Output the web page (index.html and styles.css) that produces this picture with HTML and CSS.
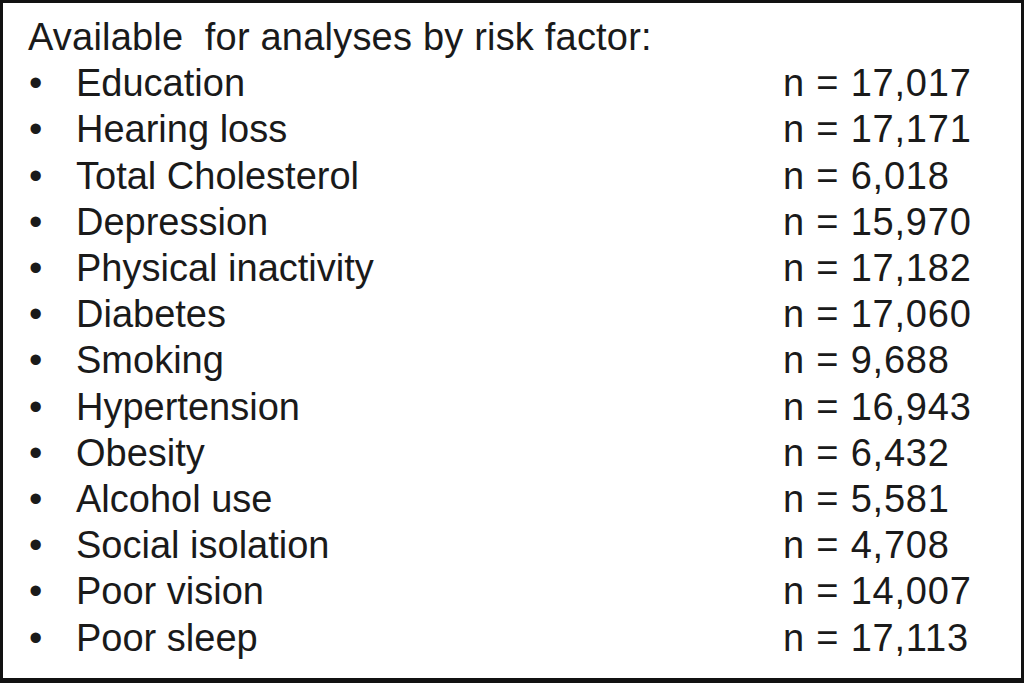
FILE: index.html
```html
<!DOCTYPE html>
<html>
<head>
<meta charset="utf-8">
<link rel="stylesheet" href="styles.css">
</head>
<body>
<div class="box">
  <div class="title">Available&nbsp; for analyses by risk factor:</div>
  <ul class="list">
    <li class="row"><span class="bullet">•</span><span class="name">Education</span><span class="n">n = 17,017</span></li>
    <li class="row"><span class="bullet">•</span><span class="name">Hearing loss</span><span class="n">n = 17,171</span></li>
    <li class="row"><span class="bullet">•</span><span class="name">Total Cholesterol</span><span class="n">n = 6,018</span></li>
    <li class="row"><span class="bullet">•</span><span class="name">Depression</span><span class="n">n = 15,970</span></li>
    <li class="row"><span class="bullet">•</span><span class="name">Physical inactivity</span><span class="n">n = 17,182</span></li>
    <li class="row"><span class="bullet">•</span><span class="name">Diabetes</span><span class="n">n = 17,060</span></li>
    <li class="row"><span class="bullet">•</span><span class="name">Smoking</span><span class="n">n = 9,688</span></li>
    <li class="row"><span class="bullet">•</span><span class="name">Hypertension</span><span class="n">n = 16,943</span></li>
    <li class="row"><span class="bullet">•</span><span class="name">Obesity</span><span class="n">n = 6,432</span></li>
    <li class="row"><span class="bullet">•</span><span class="name">Alcohol use</span><span class="n">n = 5,581</span></li>
    <li class="row"><span class="bullet">•</span><span class="name">Social isolation</span><span class="n">n = 4,708</span></li>
    <li class="row"><span class="bullet">•</span><span class="name">Poor vision</span><span class="n">n = 14,007</span></li>
    <li class="row"><span class="bullet">•</span><span class="name">Poor sleep</span><span class="n">n = 17,113</span></li>
  </ul>
</div>
</body>
</html>
```
FILE: styles.css
```css
html, body {
  margin: 0;
  padding: 0;
  background: #fff;
}
.box {
  box-sizing: border-box;
  width: 1024px;
  height: 683px;
  border-style: solid;
  border-color: #111;
  border-width: 3px 3px 5px 3px;
  padding: 11px 0 0 25px;
  font-family: "Liberation Sans", Arial, sans-serif;
  font-size: 38px;
  line-height: 46.2px;
  color: #1a1a1a;
}
.title {
  white-space: pre;
  letter-spacing: 0.2px;
}
.list {
  list-style: none;
  margin: 0;
  padding: 0;
}
.row {
  display: grid;
  grid-template-columns: 48px 707px auto;
  white-space: nowrap;
}
.bullet {
  padding-left: 1px;
}
.n {
  letter-spacing: 0.8px;
}
```
